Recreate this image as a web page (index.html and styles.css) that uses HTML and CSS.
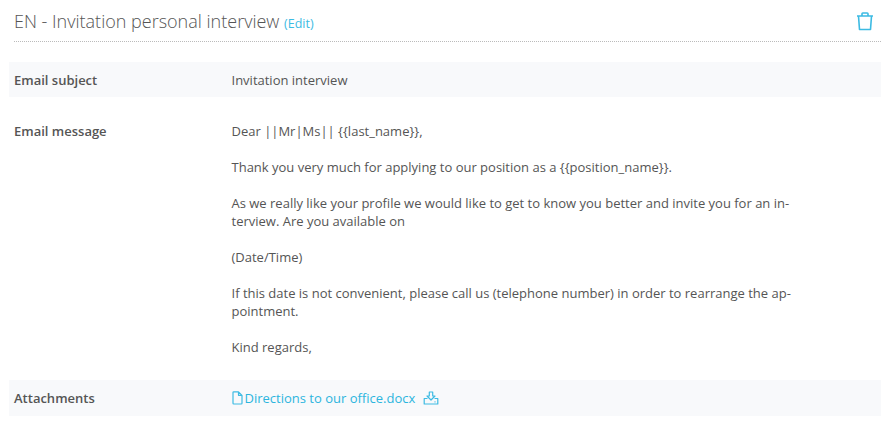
FILE: index.html
```
<!DOCTYPE html>
<html lang="en">
<head>
<meta charset="utf-8">
<title>Invitation personal interview</title>
<link rel="stylesheet" href="styles.css">
</head>
<body>
<div class="page">
  <header class="head">
    <h1 class="title">EN - Invitation personal interview <a class="edit">(Edit)</a></h1>
    <svg class="trash" width="18" height="20" viewBox="0 0 18 20" fill="none" stroke="#3dbbe3" stroke-width="1.6" stroke-linejoin="round"><path d="M1 5H17M2.5 5L3.5 18.5H14.5L15.5 5M6 5V2.8Q6 2 6.8 2H11.2Q12 2 12 2.8V5"/></svg>
  </header>
  <div class="row shaded subject">
    <div class="label">Email subject</div>
    <div class="value">Invitation interview</div>
  </div>
  <div class="row message">
    <div class="label">Email message</div>
    <div class="value body">
      <p>Dear ||Mr|Ms|| {{last_name}},</p>
      <p>Thank you very much for applying to our position as a {{position_name}}.</p>
      <p>As we really like your profile we would like to get to know you better and invite you for an in-<br>terview. Are you available on</p>
      <p>(Date/Time)</p>
      <p>If this date is not convenient, please call us (telephone number) in order to rearrange the ap-<br>pointment.</p>
      <p>Kind regards,</p>
    </div>
  </div>
  <div class="row shaded attach">
    <div class="label">Attachments</div>
    <div class="value link">
      <svg class="doc" width="11" height="14" viewBox="0 0 11 14" fill="none" stroke="#3dbbe3" stroke-width="1.2" stroke-linejoin="round"><path d="M1 1.5Q1 .8 1.7 .8H6.5L10 4.3V12.3Q10 13 9.3 13H1.7Q1 13 1 12.3ZM6.5 .8V4.3H10"/></svg>
      <span>Directions to our office.docx</span>
      <svg class="dl" width="16" height="14" viewBox="0 0 16 14" fill="none" stroke="#3dbbe3" stroke-width="1.2" stroke-linejoin="round"><path d="M6.3 1H9.7V5H12L8 9 4 5H6.3ZM4.5 7.5H1.2V13H14.8V7.5H11.5M11.5 10.8H12.5"/></svg>
    </div>
  </div>
</div>
</body>
</html>
```
FILE: styles.css
```
html, body { margin: 0; padding: 0; background: #fff; }
body { font-family: "Open Sans", sans-serif; color: #555; font-size: 13px; }
.page { width: 872px; margin-left: 9px; height: 434px; }
.head {
  display: flex; justify-content: space-between; align-items: center;
  margin-left: 5px; height: 42px; box-sizing: border-box;
  border-bottom: 1px dotted #bbb; padding-top: 3px;
}
.title { margin: 0; font-size: 18px; font-weight: 300; color: #555; line-height: 24px; }
.edit { font-size: 12.5px; color: #3dbbe3; font-weight: 400; }
.trash { margin-right: 7px; margin-top: -3px; }
.row { display: flex; }
.shaded { background: #f8f9fb; }
.label { width: 217.5px; padding-left: 5px; font-weight: 600; flex: none; }
.value { flex: 1; }
.subject { margin-top: 20px; height: 35px; align-items: center; }
.message { padding-top: 25px; height: 283px; box-sizing: border-box; line-height: 18px; }
.body p { margin: 0 0 18px; width: 570px; }
.attach { height: 36px; align-items: center; }
.link { display: flex; align-items: center; color: #2cb5de; }
.doc { margin-right: 2px; }
.dl { margin-left: 8px; }
```
